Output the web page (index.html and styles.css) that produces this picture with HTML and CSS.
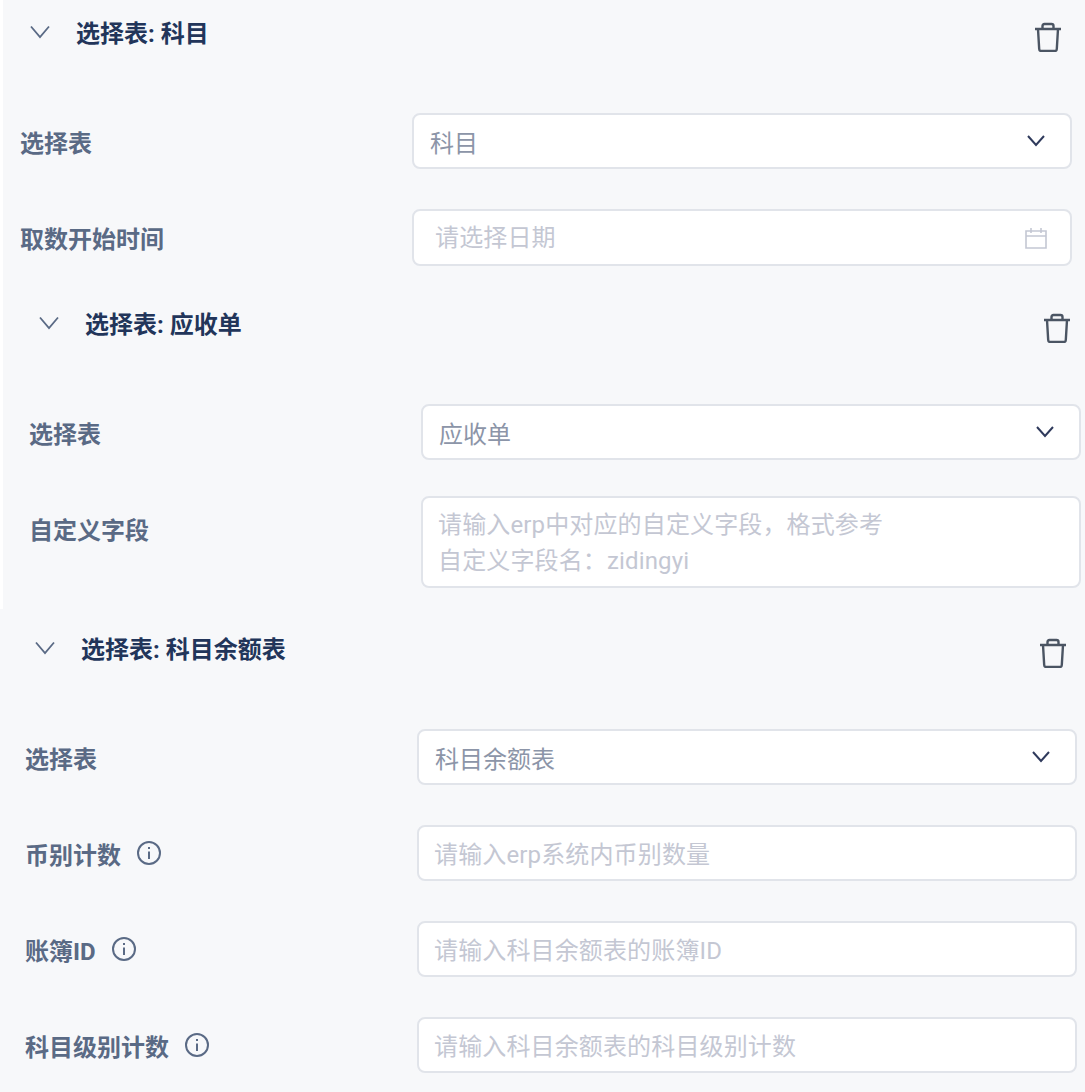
FILE: index.html
```html
<!DOCTYPE html>
<html>
<head>
  <title>选择表</title>
  <link rel="stylesheet" href="styles.css">
</head>
<body>

<svg class="defs" width="0" height="0">
  <symbol id="icon-fold" viewBox="0 0 20 14">
    <path d="M1 1.5 L10 12 L19 1.5" fill="none" stroke="currentColor" stroke-width="1.8"/>
  </symbol>
  <symbol id="icon-trash" viewBox="0 0 28 30">
    <path d="M1 7 H27 M4 7 L5.2 27 Q5.3 29 7.2 29 H20.8 Q22.7 29 22.8 27 L24 7 M8.5 7 V4 Q8.5 2 10.5 2 H17.5 Q19.5 2 19.5 4 V7" fill="none" stroke="currentColor" stroke-width="2.4"/>
  </symbol>
  <symbol id="icon-arrow" viewBox="0 0 20 14">
    <path d="M2 2 L10 11 L18 2" fill="none" stroke="currentColor" stroke-width="2"/>
  </symbol>
  <symbol id="icon-date" viewBox="0 0 22 22">
    <path d="M1 4 H21 V21 H1 Z M1 9 H21 M6 1 V6 M16 1 V6" fill="none" stroke="currentColor" stroke-width="1.6"/>
  </symbol>
  <symbol id="icon-info" viewBox="0 0 24 24">
    <circle cx="12" cy="12" r="11" fill="none" stroke="currentColor" stroke-width="2"/>
    <path d="M12 10.5 V18 M12 6 V8" fill="none" stroke="currentColor" stroke-width="2"/>
  </symbol>
</svg>

<div class="upper">

  <section class="group group-first">
    <div class="group-head">
      <svg class="fold"><use href="#icon-fold"/></svg>
      <h3>选择表: 科目</h3>
      <svg class="trash"><use href="#icon-trash"/></svg>
    </div>
    <div class="row">
      <label>选择表</label>
      <div class="field"><span class="value">科目</span><svg class="arrow"><use href="#icon-arrow"/></svg></div>
    </div>
    <div class="row">
      <label>取数开始时间</label>
      <div class="field date"><span class="hint">请选择日期</span><svg class="calendar"><use href="#icon-date"/></svg></div>
    </div>
  </section>

  <section class="group group-second">
    <div class="group-head">
      <svg class="fold"><use href="#icon-fold"/></svg>
      <h3>选择表: 应收单</h3>
      <svg class="trash"><use href="#icon-trash"/></svg>
    </div>
    <div class="row">
      <label>选择表</label>
      <div class="field"><span class="value">应收单</span><svg class="arrow"><use href="#icon-arrow"/></svg></div>
    </div>
    <div class="row row-area">
      <label>自定义字段</label>
      <div class="field area"><span class="hint">请输入erp中对应的自定义字段，格式参考<br>自定义字段名：zidingyi</span></div>
    </div>
  </section>

</div>

<section class="group group-third">
  <div class="group-head">
    <svg class="fold"><use href="#icon-fold"/></svg>
    <h3>选择表: 科目余额表</h3>
    <svg class="trash"><use href="#icon-trash"/></svg>
  </div>
  <div class="row">
    <label>选择表</label>
    <div class="field"><span class="value">科目余额表</span><svg class="arrow"><use href="#icon-arrow"/></svg></div>
  </div>
  <div class="row">
    <label>币别计数<svg class="info"><use href="#icon-info"/></svg></label>
    <div class="field"><span class="hint">请输入erp系统内币别数量</span></div>
  </div>
  <div class="row">
    <label>账簿ID<svg class="info"><use href="#icon-info"/></svg></label>
    <div class="field"><span class="hint">请输入科目余额表的账簿ID</span></div>
  </div>
  <div class="row">
    <label>科目级别计数<svg class="info"><use href="#icon-info"/></svg></label>
    <div class="field"><span class="hint">请输入科目余额表的科目级别计数</span></div>
  </div>
</section>

</body>
</html>
```

FILE: styles.css
```css
body {
  margin: 0;
  background-color: #f7f8fa;
  font-family: Roboto, "Noto Sans CJK SC", sans-serif;
  font-size: 24px;
}

.defs {
  display: block;
  height: 0;
}

/* White sliver on the left of the first two groups */
.upper {
  background-color: #fff;
  padding-left: 3px;
}

.upper .group {
  background-color: #f7f8fa;
}

.group-first {
  padding-left: 17px;
  padding-bottom: 25px;
}

.group-second {
  padding-left: 26px;
  padding-bottom: 21px;
}

.group-third {
  padding-left: 25px;
  padding-top: 7px;
}

.group-head {
  display: flex;
  width: 1042px;
  height: 66px;
  margin-bottom: 47px;
  padding-left: 10px;
  align-items: center;
  box-sizing: border-box;
}

.group-head h3 {
  flex: 1;
  margin: 1px 0 0 26px;
  color: #22355a;
  font-size: 24px;
  font-weight: 700;
  line-height: 66px;
}

.fold {
  width: 20px;
  height: 14px;
  margin-top: -2px;
  color: #5a6a85;
}

.trash {
  width: 28px;
  height: 30px;
  margin-top: 8px;
  color: #4b5563;
}

.row {
  display: grid;
  grid-template-columns: 392px 660px;
  margin-bottom: 40px;
  align-items: start;
}

.row:last-child {
  margin-bottom: 0;
}

.row label {
  display: flex;
  height: 56px;
  align-items: center;
  color: #5a6a85;
  font-weight: 700;
}

.row-area {
  margin-top: -4px;
}

.row-area label {
  height: 64px;
}

.info {
  width: 24px;
  height: 24px;
  margin-left: 16px;
  color: #5a6a85;
}

.field {
  display: flex;
  height: 56px;
  padding: 0 24px 0 16px;
  align-items: center;
  justify-content: space-between;
  background-color: #fff;
  border: 2px solid #e1e4ea;
  border-radius: 8px;
  box-sizing: border-box;
  line-height: 36px;
}

.field.date {
  height: 57px;
  padding-left: 22px;
  padding-right: 23px;
}

.field.date .hint {
  margin-top: 0;
}

.field.area {
  height: 92px;
}

.field.area .hint {
  margin-top: 2px;
}

.value {
  margin-top: 5px;
  color: #8c95a8;
}

.hint {
  margin-top: 4px;
  margin-left: -1px;
  color: #c4c7d3;
  letter-spacing: 0.14px;
}

.arrow {
  width: 20px;
  height: 14px;
  color: #2f3a5c;
}

.calendar {
  width: 22px;
  height: 22px;
  color: #c4c7d3;
}
```
